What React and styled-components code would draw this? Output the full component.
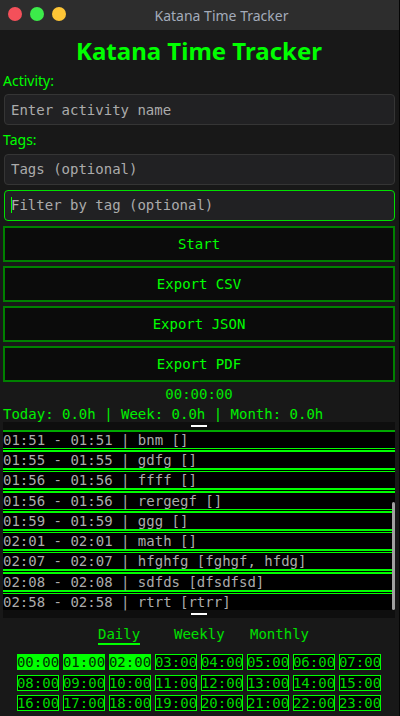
import React from "react";
import styled, { createGlobalStyle } from "styled-components";

const Global = createGlobalStyle`
  *, *::before, *::after { box-sizing: border-box; }
  body { margin: 0; background: #181818; }
  button, input { font: inherit; margin: 0; }
`;

const Window = styled.div`
  min-height: 100vh;
  background: #181818;
  border-right: 1px solid #050505;
  color: #00ff00;
  font: 14px/20px "DejaVu Sans Mono", monospace;
`;

const TitleBar = styled.header`
  display: grid;
  grid-template-columns: 44px 1fr;
  align-items: center;
  height: 30px;
  background: #2d2d2d;
  padding-left: 8px;
`;

const Lights = styled.div`
  display: flex;
  gap: 8px;
  height: 16px;
`;

const Light = styled.button`
  flex: none;
  width: 14px;
  height: 14px;
  padding: 0;
  border: 0;
  border-radius: 50%;
  background: ${(p) => p.$color};
`;

const WindowTitle = styled.span`
  padding-top: 2px;
  text-align: center;
  padding-right: 8px;
  font: 14px/20px "Noto Sans", sans-serif;
  color: #a3abba;
`;

const Main = styled.main`
  display: flex;
  flex-direction: column;
  padding: 0 4px 4px 3px;
`;

const Heading = styled.h1`
  margin: 4px 0 0;
  text-align: center;
  font: bold 24px/34px "Noto Sans", sans-serif;
`;

const Label = styled.label`
  margin: ${(p) => (p.$tight ? "0 0 4px" : "3px 0")};
  font: 14px/20px "Noto Sans", sans-serif;
`;

const Field = styled.div`
  position: relative;
  display: flex;
  margin: 0 0 5px 1px;
`;

const TextInput = styled.input`
  width: 100%;
  height: 31px;
  padding: 0 6px ${(p) => (p.$raised ? 2 : 0)}px;
  background: #212123;
  border: 1px solid ${(p) => (p.$active ? "#00e000" : "#353535")};
  border-radius: 4px;
  color: #b0b0b0;
  outline: none;
  &::placeholder { color: #ababab; opacity: 1; }
`;

const Caret = styled.span`
  position: absolute;
  left: 7px;
  top: 7px;
  width: 1px;
  height: 16px;
  background: #00ff00;
`;

const Actions = styled.div`
  display: grid;
  gap: 4px;
`;

const ActionButton = styled.button`
  height: 36px;
  padding: 0;
  background: #0b0b0b;
  border: 2px solid #008000;
  color: #00ff00;
`;

const Timer = styled.time`
  margin-top: 2px;
  text-align: center;
  color: #00e600;
`;

const Summary = styled.p`
  margin: 0;
  height: 18px;
  line-height: 20px;
  white-space: pre;
  color: #00f000;
`;

const Log = styled.section`
  position: relative;
  background: #0e0e0e;
`;

const Grip = styled.div`
  display: flex;
  justify-content: center;
  height: 8px;
  padding-top: 3px;
  &::before {
    content: "";
    width: 16px;
    height: 2px;
    background: #ffffff;
  }
`;

const Entries = styled.ul`
  display: grid;
  gap: 1px;
  margin: 0;
  padding: 0;
  list-style: none;
  background: #000000;
`;

const Entry = styled.li`
  border: solid #00ff00;
  border-width: ${(p) => p.$top}px 0 ${(p) => p.$bottom}px;
  line-height: 16px;
  white-space: pre;
  color: #ababab;
  &:first-child { border-top-color: #00a800; }
`;

const Scrollbar = styled.div`
  position: absolute;
  right: 0;
  bottom: 8px;
  width: 3px;
  height: 108px;
  border-radius: 2px;
  background: #a0a0a0;
`;

const Tabs = styled.nav`
  display: grid;
  grid-template-columns: 76px 76px auto;
  justify-content: center;
  justify-items: start;
  margin-top: 8px;
  padding-left: 9px;
`;

const Tab = styled.button`
  padding: 0;
  background: none;
  border: 0;
  border-bottom: 2px solid ${(p) => (p.$active ? "#00ff00" : "transparent")};
  color: #00e000;
  line-height: 17px;
`;

const Hours = styled.div`
  display: grid;
  grid-template-columns: repeat(8, 42px);
  grid-template-rows: 17px 16px 16px;
  align-items: start;
  justify-content: center;
  gap: 4px;
  margin-top: 9px;
`;

const Hour = styled.span`
  display: flex;
  justify-content: center;
  height: 16px;
  border: 1px solid #00ff00;
  background: ${(p) => (p.$filled ? "#00ff00" : "#000000")};
  color: ${(p) => (p.$filled ? "#003000" : "#00d800")};
  line-height: 14px;
  white-space: nowrap;
`;

const entries = [
  ["01:51 - 01:51 | bnm []", 2, 1],
  ["01:55 - 01:55 | gdfg []", 2, 2],
  ["01:56 - 01:56 | ffff []", 1, 2],
  ["01:56 - 01:56 | rergegf []", 2, 1],
  ["01:59 - 01:59 | ggg []", 2, 2],
  ["02:01 - 02:01 | math []", 1, 2],
  ["02:07 - 02:07 | hfghfg [fghgf, hfdg]", 1, 2],
  ["02:08 - 02:08 | sdfds [dfsdfsd]", 2, 2],
  ["02:58 - 02:58 | rtrt [rtrr]", 1, 0],
];

const hours = Array.from({ length: 24 }, (_, h) => String(h).padStart(2, "0") + ":00");

export default function App() {
  return (
    <Window>
      <Global />
      <TitleBar>
        <Lights>
          <Light $color="#f4505a" aria-label="Close" />
          <Light $color="#3ceb4a" aria-label="Maximize" />
          <Light $color="#fdc536" aria-label="Minimize" />
        </Lights>
        <WindowTitle>Katana Time Tracker</WindowTitle>
      </TitleBar>
      <Main>
        <Heading>Katana Time Tracker</Heading>
        <Label htmlFor="activity">Activity:</Label>
        <Field>
          <TextInput id="activity" placeholder="Enter activity name" />
        </Field>
        <Label htmlFor="tags" $tight>Tags:</Label>
        <Field>
          <TextInput id="tags" $raised placeholder="Tags (optional)" />
        </Field>
        <Field>
          <TextInput $active $raised aria-label="Filter by tag" placeholder="Filter by tag (optional)" />
          <Caret />
        </Field>
        <Actions>
          <ActionButton>Start</ActionButton>
          <ActionButton>Export CSV</ActionButton>
          <ActionButton>Export JSON</ActionButton>
          <ActionButton>Export PDF</ActionButton>
        </Actions>
        <Timer>00:00:00</Timer>
        <Summary>Today: 0.0h | Week: 0.0h | Month: 0.0h</Summary>
        <Log>
          <Grip />
          <Entries>
            {entries.map(([text, top, bottom]) => (
              <Entry key={text} $top={top} $bottom={bottom}>{text}</Entry>
            ))}
          </Entries>
          <Grip />
          <Scrollbar />
        </Log>
        <Tabs>
          <Tab $active>Daily</Tab>
          <Tab>Weekly</Tab>
          <Tab>Monthly</Tab>
        </Tabs>
        <Hours>
          {hours.map((h, i) => (
            <Hour key={h} $filled={i < 3}>{h}</Hour>
          ))}
        </Hours>
      </Main>
    </Window>
  );
}
